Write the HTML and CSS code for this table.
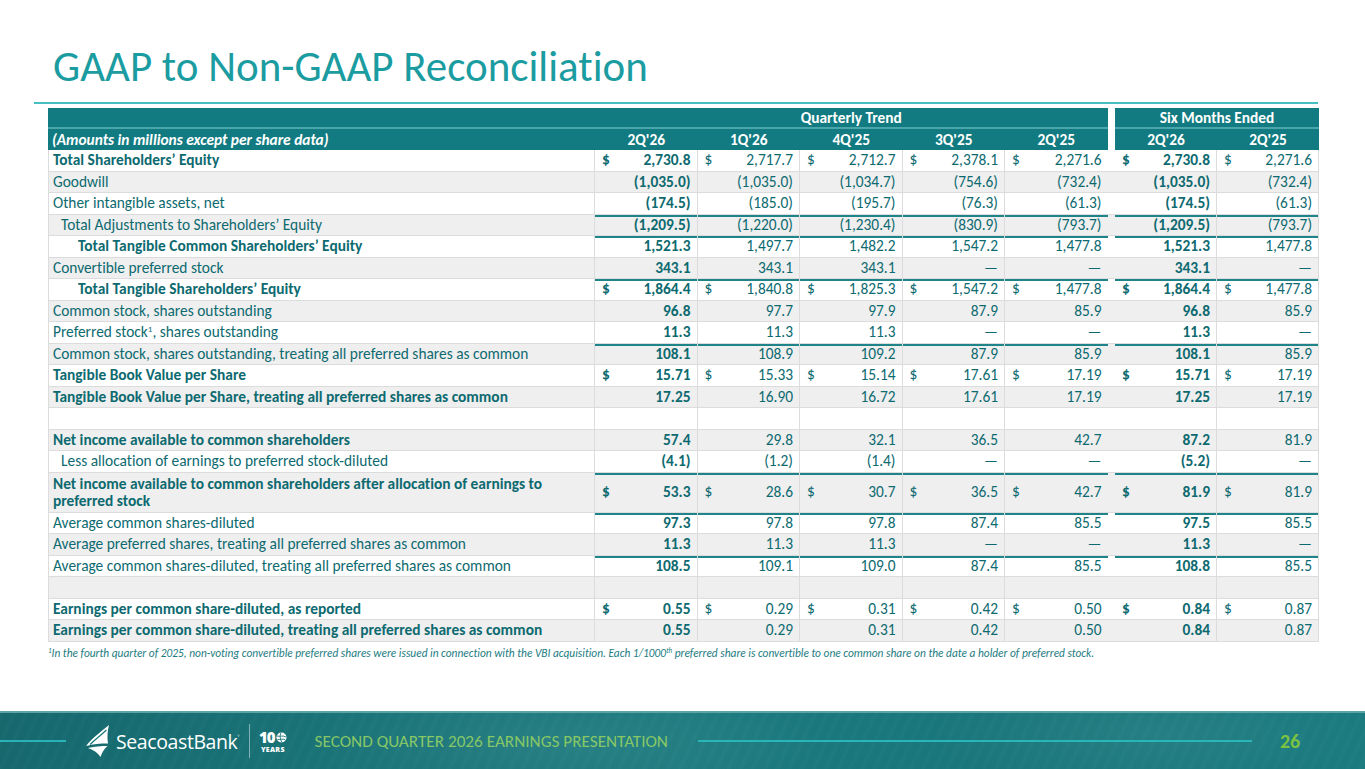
FILE: index.html
```html
<!DOCTYPE html>
<html lang="en">
<head>
<meta charset="utf-8">
<title>GAAP to Non-GAAP Reconciliation</title>
<link rel="stylesheet" href="styles.css">
</head>
<body>
<div class="slide">
  <h1 class="title">GAAP to Non-GAAP Reconciliation</h1>
  <div class="rule"></div>
  <table class="recon">
    <colgroup>
      <col class="c-label"><col class="c-q"><col class="c-q"><col class="c-q"><col class="c-q"><col class="c-q"><col class="c-gap"><col class="c-s"><col class="c-s">
    </colgroup>
    <thead>
      <tr class="h1">
        <th></th><th colspan="5">Quarterly Trend</th><th class="gap"></th><th colspan="2">Six Months Ended</th>
      </tr>
      <tr class="h2">
        <th class="hl">(Amounts in millions except per share data)</th>
        <th>2Q'26</th><th>1Q'26</th><th>4Q'25</th><th>3Q'25</th><th>2Q'25</th><th class="gap"></th><th>2Q'26</th><th>2Q'25</th>
      </tr>
    </thead>
    <tbody>
      <tr class="b">
        <td class="lbl">Total Shareholders’ Equity</td>
        <td class="n bc"><span class="cur">$</span>2,730.8</td><td class="n"><span class="cur">$</span>2,717.7</td><td class="n"><span class="cur">$</span>2,712.7</td><td class="n"><span class="cur">$</span>2,378.1</td><td class="n q5"><span class="cur">$</span>2,271.6</td><td class="gap"></td><td class="n bc"><span class="cur">$</span>2,730.8</td><td class="n"><span class="cur">$</span>2,271.6</td>
      </tr>
      <tr>
        <td class="lbl">Goodwill</td>
        <td class="n bc">(1,035.0)</td><td class="n">(1,035.0)</td><td class="n">(1,034.7)</td><td class="n">(754.6)</td><td class="n q5">(732.4)</td><td class="gap"></td><td class="n bc">(1,035.0)</td><td class="n">(732.4)</td>
      </tr>
      <tr>
        <td class="lbl">Other intangible assets, net</td>
        <td class="n bc">(174.5)</td><td class="n">(185.0)</td><td class="n">(195.7)</td><td class="n">(76.3)</td><td class="n q5">(61.3)</td><td class="gap"></td><td class="n bc">(174.5)</td><td class="n">(61.3)</td>
      </tr>
      <tr class="tl">
        <td class="lbl i1">Total Adjustments to Shareholders’ Equity</td>
        <td class="n bc">(1,209.5)</td><td class="n">(1,220.0)</td><td class="n">(1,230.4)</td><td class="n">(830.9)</td><td class="n q5">(793.7)</td><td class="gap"></td><td class="n bc">(1,209.5)</td><td class="n">(793.7)</td>
      </tr>
      <tr class="tl b">
        <td class="lbl i2">Total Tangible Common Shareholders’ Equity</td>
        <td class="n bc">1,521.3</td><td class="n">1,497.7</td><td class="n">1,482.2</td><td class="n">1,547.2</td><td class="n q5">1,477.8</td><td class="gap"></td><td class="n bc">1,521.3</td><td class="n">1,477.8</td>
      </tr>
      <tr>
        <td class="lbl">Convertible preferred stock</td>
        <td class="n bc">343.1</td><td class="n">343.1</td><td class="n">343.1</td><td class="n">—</td><td class="n q5">—</td><td class="gap"></td><td class="n bc">343.1</td><td class="n">—</td>
      </tr>
      <tr class="tl b">
        <td class="lbl i2">Total Tangible Shareholders’ Equity</td>
        <td class="n bc"><span class="cur">$</span>1,864.4</td><td class="n"><span class="cur">$</span>1,840.8</td><td class="n"><span class="cur">$</span>1,825.3</td><td class="n"><span class="cur">$</span>1,547.2</td><td class="n q5"><span class="cur">$</span>1,477.8</td><td class="gap"></td><td class="n bc"><span class="cur">$</span>1,864.4</td><td class="n"><span class="cur">$</span>1,477.8</td>
      </tr>
      <tr>
        <td class="lbl">Common stock, shares outstanding</td>
        <td class="n bc">96.8</td><td class="n">97.7</td><td class="n">97.9</td><td class="n">87.9</td><td class="n q5">85.9</td><td class="gap"></td><td class="n bc">96.8</td><td class="n">85.9</td>
      </tr>
      <tr>
        <td class="lbl">Preferred stock<sup>1</sup>, shares outstanding</td>
        <td class="n bc">11.3</td><td class="n">11.3</td><td class="n">11.3</td><td class="n">—</td><td class="n q5">—</td><td class="gap"></td><td class="n bc">11.3</td><td class="n">—</td>
      </tr>
      <tr class="tl">
        <td class="lbl">Common stock, shares outstanding, treating all preferred shares as common</td>
        <td class="n bc">108.1</td><td class="n">108.9</td><td class="n">109.2</td><td class="n">87.9</td><td class="n q5">85.9</td><td class="gap"></td><td class="n bc">108.1</td><td class="n">85.9</td>
      </tr>
      <tr class="b">
        <td class="lbl">Tangible Book Value per Share</td>
        <td class="n bc"><span class="cur">$</span>15.71</td><td class="n"><span class="cur">$</span>15.33</td><td class="n"><span class="cur">$</span>15.14</td><td class="n"><span class="cur">$</span>17.61</td><td class="n q5"><span class="cur">$</span>17.19</td><td class="gap"></td><td class="n bc"><span class="cur">$</span>15.71</td><td class="n"><span class="cur">$</span>17.19</td>
      </tr>
      <tr class="b">
        <td class="lbl">Tangible Book Value per Share, treating all preferred shares as common</td>
        <td class="n bc">17.25</td><td class="n">16.90</td><td class="n">16.72</td><td class="n">17.61</td><td class="n q5">17.19</td><td class="gap"></td><td class="n bc">17.25</td><td class="n">17.19</td>
      </tr>
      <tr>
        <td class="lbl"></td>
        <td class="n"></td><td class="n"></td><td class="n"></td><td class="n"></td><td class="n q5"></td><td class="gap"></td><td class="n"></td><td class="n"></td>
      </tr>
      <tr class="b">
        <td class="lbl">Net income available to common shareholders</td>
        <td class="n bc">57.4</td><td class="n">29.8</td><td class="n">32.1</td><td class="n">36.5</td><td class="n q5">42.7</td><td class="gap"></td><td class="n bc">87.2</td><td class="n">81.9</td>
      </tr>
      <tr>
        <td class="lbl i1">Less allocation of earnings to preferred stock-diluted</td>
        <td class="n bc">(4.1)</td><td class="n">(1.2)</td><td class="n">(1.4)</td><td class="n">—</td><td class="n q5">—</td><td class="gap"></td><td class="n bc">(5.2)</td><td class="n">—</td>
      </tr>
      <tr class="tl b dbl">
        <td class="lbl">Net income available to common shareholders after allocation of earnings to<br>preferred stock</td>
        <td class="n bc"><span class="cur">$</span>53.3</td><td class="n"><span class="cur">$</span>28.6</td><td class="n"><span class="cur">$</span>30.7</td><td class="n"><span class="cur">$</span>36.5</td><td class="n q5"><span class="cur">$</span>42.7</td><td class="gap"></td><td class="n bc"><span class="cur">$</span>81.9</td><td class="n"><span class="cur">$</span>81.9</td>
      </tr>
      <tr class="tl">
        <td class="lbl">Average common shares-diluted</td>
        <td class="n bc">97.3</td><td class="n">97.8</td><td class="n">97.8</td><td class="n">87.4</td><td class="n q5">85.5</td><td class="gap"></td><td class="n bc">97.5</td><td class="n">85.5</td>
      </tr>
      <tr>
        <td class="lbl">Average preferred shares, treating all preferred shares as common</td>
        <td class="n bc">11.3</td><td class="n">11.3</td><td class="n">11.3</td><td class="n">—</td><td class="n q5">—</td><td class="gap"></td><td class="n bc">11.3</td><td class="n">—</td>
      </tr>
      <tr class="tl">
        <td class="lbl">Average common shares-diluted, treating all preferred shares as common</td>
        <td class="n bc">108.5</td><td class="n">109.1</td><td class="n">109.0</td><td class="n">87.4</td><td class="n q5">85.5</td><td class="gap"></td><td class="n bc">108.8</td><td class="n">85.5</td>
      </tr>
      <tr>
        <td class="lbl"></td>
        <td class="n"></td><td class="n"></td><td class="n"></td><td class="n"></td><td class="n q5"></td><td class="gap"></td><td class="n"></td><td class="n"></td>
      </tr>
      <tr class="b">
        <td class="lbl">Earnings per common share-diluted, as reported</td>
        <td class="n bc"><span class="cur">$</span>0.55</td><td class="n"><span class="cur">$</span>0.29</td><td class="n"><span class="cur">$</span>0.31</td><td class="n"><span class="cur">$</span>0.42</td><td class="n q5"><span class="cur">$</span>0.50</td><td class="gap"></td><td class="n bc"><span class="cur">$</span>0.84</td><td class="n"><span class="cur">$</span>0.87</td>
      </tr>
      <tr class="b">
        <td class="lbl">Earnings per common share-diluted, treating all preferred shares as common</td>
        <td class="n bc">0.55</td><td class="n">0.29</td><td class="n">0.31</td><td class="n">0.42</td><td class="n q5">0.50</td><td class="gap"></td><td class="n bc">0.84</td><td class="n">0.87</td>
      </tr>
    </tbody>
  </table>
  <p class="footnote"><sup>1</sup>In the fourth quarter of 2025, non-voting convertible preferred shares were issued in connection with the VBI acquisition. Each 1/1000<sup>th</sup> preferred share is convertible to one common share on the date a holder of preferred stock.</p>

  <footer class="footer">
    <div class="fline-left"></div>
    <div class="logo">
      <svg class="sail" width="27" height="32" viewBox="0 0 27 32" aria-hidden="true">
        <path d="M24 0 C17 6 8 12 1 21 C8 19 15 18.5 23 18.5 C22 12 22.5 6 24 0 Z" fill="#fff"/>
        <path d="M21.5 5 C16 10 10 14.5 5 19.5" stroke="#17757a" stroke-width="1.2" fill="none"/>
        <path d="M3 23 C10 21.5 16 21 22.5 21 C19 24 17 27.5 15.5 32 C13 28 9 25 3 23 Z" fill="#fff"/>
      </svg>
      <span class="brand">SeacoastBank</span><span class="reg">®</span>
    </div>
    <div class="divider"></div>
    <div class="years">
      <span class="yn">10<svg class="ball" width="11" height="11" viewBox="0 0 11 11" aria-hidden="true"><circle cx="5.5" cy="5.5" r="5" fill="#fff"/><path d="M1 4 C4 5 7 3 10 5 M1.5 7.5 C4 8 7 6 9.5 8 M5 0.6 C3.5 4 4 7 6 10.4" stroke="#17757a" stroke-width="0.9" fill="none"/></svg></span>
      <span class="yr">YEARS</span>
    </div>
    <span class="subtitle">SECOND QUARTER 2026 EARNINGS PRESENTATION</span>
    <div class="fline-right"></div>
    <span class="pnum">26</span>
  </footer>
</div>
</body>
</html>
```

FILE: styles.css
```css
body {
  margin: 0;
  background: #ffffff;
}

.slide {
  width: 1365px;
  height: 769px;
  overflow: hidden;
  display: flex;
  flex-direction: column;
  background: #ffffff;
  font-family: Carlito, Lato, "Liberation Sans", sans-serif;
  font-variant-ligatures: none;
  font-feature-settings: "liga" 0, "clig" 0;
  color: #0d6a70;
}

.title {
  margin: 0;
  padding: 41px 0 0 53px;
  font-size: 43px;
  line-height: 52px;
  font-weight: 400;
  color: #1b9ca1;
}

.rule {
  margin: 9px 0 0 34px;
  width: 1284px;
  height: 2px;
  background: #45bfc2;
}

.recon {
  margin: 4px 0 0 48px;
  width: 1271px;
  table-layout: fixed;
  border-collapse: separate;
  border-spacing: 0;
  font-size: 15.4px;
}

.c-label { width: 547px; }
.c-q { width: 102.5px; }
.c-gap { width: 7.5px; }
.c-s { width: 102px; }

.recon th {
  padding: 0;
  background: #127b81;
  color: #ffffff;
  font-weight: 700;
  line-height: 16px;
  text-align: center;
}

.recon th.gap {
  background: #ffffff;
}

.h1 { height: 21px; }
.h1 th { border-bottom: 2px solid #4aa6ab; }
.h1 th.gap { border-bottom: none; }
.h2 { height: 21px; }

.recon th.hl {
  text-align: left;
  padding-left: 4px;
  font-style: italic;
}

.recon tbody tr { height: 21.5px; }
.recon tbody tr.dbl { height: 40px; }
.recon tbody tr.dbl td.lbl { line-height: 17px; }

.recon td {
  padding: 0 6px 0 7px;
  line-height: 16px;
  text-align: right;
  white-space: nowrap;
  border-bottom: 1px solid #dcdcdc;
  border-right: 1px solid #dcdcdc;
  font-weight: 400;
}

.recon tbody tr:nth-child(even) td { background: #efefef; }

.recon td.lbl {
  text-align: left;
  padding-left: 4px;
  border-left: 1px solid #dcdcdc;
  white-space: normal;
}

.recon td.i1 { padding-left: 12px; }
.recon td.i2 { padding-left: 29px; }

.recon td.q5 { border-right: none; }
.recon td.gap { padding: 0; border-right: none; }

.recon tr.b td.lbl { font-weight: 700; }
.recon td.bc { font-weight: 700; }

.recon tr.tl td.n { box-shadow: inset 0 2px 0 #1f8489; }

.cur { float: left; }

.recon sup {
  font-size: 9px;
  line-height: 0;
  vertical-align: 5px;
}

.footnote {
  margin: 5px 0 0 48px;
  font-size: 11.4px;
  line-height: 13px;
  font-style: italic;
  color: #1c7c82;
}

.footnote sup {
  font-size: 7px;
  line-height: 0;
  vertical-align: 4px;
}

.footer {
  margin-top: auto;
  height: 56px;
  border-top: 2px solid #5aa4a6;
  display: flex;
  align-items: center;
  background:
    repeating-linear-gradient(115deg, rgba(255,255,255,0.012) 0 4px, rgba(0,0,0,0.01) 4px 11px),
    radial-gradient(ellipse 260px 60px at 560px 30px, rgba(255,255,255,0.06), rgba(255,255,255,0) 100%),
    radial-gradient(ellipse 220px 60px at 1150px 20px, rgba(255,255,255,0.05), rgba(255,255,255,0) 100%),
    linear-gradient(100deg, #16696e 0%, #1a7478 25%, #1c7b7f 50%, #19777b 72%, #1b7c81 100%);
}

.fline-left {
  width: 66px;
  height: 2px;
  background: #29b3b6;
}

.logo {
  margin-left: 19px;
  display: flex;
  align-items: center;
}

.brand {
  margin-left: 4px;
  font-family: "Open Sans", sans-serif;
  font-size: 19.5px;
  letter-spacing: -0.4px;
  color: #ffffff;
}

.reg {
  align-self: flex-start;
  margin-top: 9px;
  font-size: 5px;
  color: #ffffff;
}

.divider {
  margin-left: 9px;
  width: 1px;
  height: 34px;
  background: rgba(255, 255, 255, 0.45);
}

.years {
  margin-left: 9px;
  display: flex;
  flex-direction: column;
  align-items: center;
  color: #ffffff;
  font-family: "Open Sans", sans-serif;
  line-height: 1;
}

.yn {
  display: flex;
  align-items: center;
  font-size: 15px;
  font-weight: 800;
  letter-spacing: -1px;
}

.ball { margin-left: 1px; }

.yr {
  margin-top: 1px;
  font-size: 7px;
  font-weight: 800;
  letter-spacing: 0.3px;
}

.subtitle {
  margin-left: 28px;
  font-size: 17.2px;
  font-weight: 300;
  color: #86c766;
  white-space: nowrap;
}

.fline-right {
  margin-left: 30px;
  width: 554px;
  height: 2px;
  background: #2ab6b8;
}

.pnum {
  margin-left: 28px;
  font-size: 20px;
  font-weight: 700;
  color: #7cc242;
}
```
